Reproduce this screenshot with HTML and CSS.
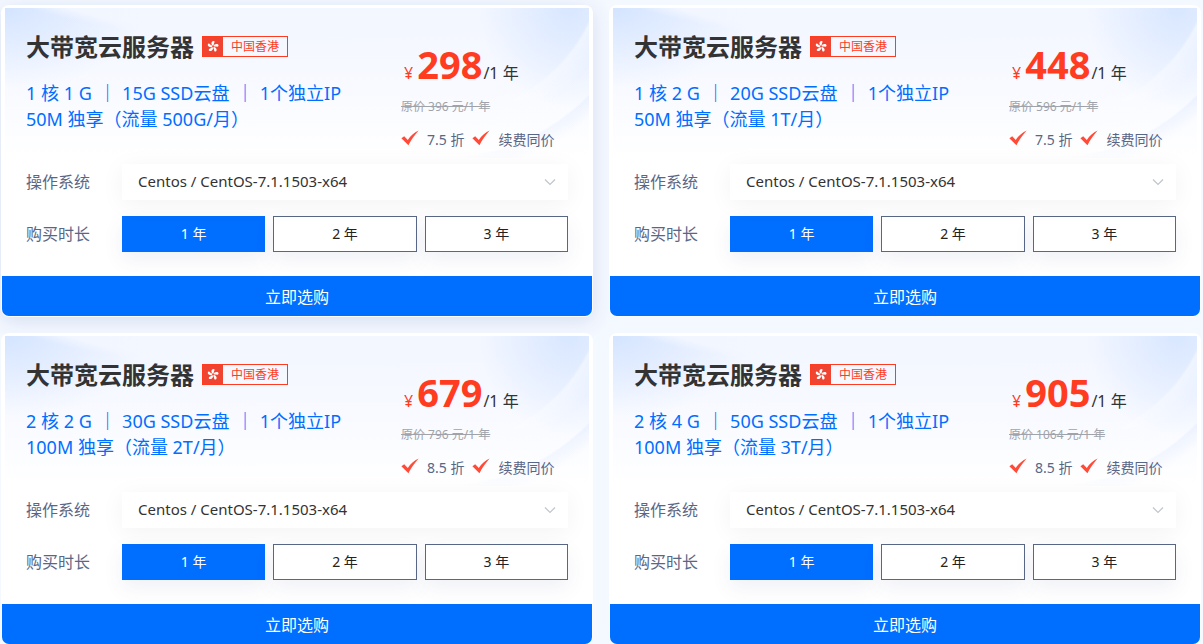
FILE: index.html
```html
<!DOCTYPE html>
<html lang="zh-CN">
<head>
  <meta charset="UTF-8">
  <title>大带宽云服务器</title>
  <link rel="stylesheet" href="styles.css">
</head>
<body>
  <svg class="sprite" xmlns="http://www.w3.org/2000/svg">
    <symbol id="icon-flower" viewBox="0 0 20 20">
      <g fill="currentColor">
        <path id="petal" d="M9.700 9C7.500 7.800 6.900 4.400 8.600 2.400c1.500-1.500 3.700-1.200 3.900.3.100 1.200-1.100 1.700-1.200 2.900-.1 1.300-.2 2.500-1.600 3.400z"/>
        <use href="#petal" transform="rotate(72 10 10)"/>
        <use href="#petal" transform="rotate(144 10 10)"/>
        <use href="#petal" transform="rotate(216 10 10)"/>
        <use href="#petal" transform="rotate(288 10 10)"/>
      </g>
    </symbol>
    <symbol id="icon-check" viewBox="0 0 18 16">
      <path fill="currentColor" d="M.4 8.200 3.200 6.300l3.600 3.600C9.500 6 13 2.800 17.600.6 13.700 5 10.200 10 7.400 15.200z"/>
    </symbol>
    <symbol id="icon-arrow" viewBox="0 0 12 8">
      <path fill="none" stroke="currentColor" stroke-width="1.200" d="M1 1.500l5 5 5-5"/>
    </symbol>
  </svg>

  <main class="plans">
    <section class="card card-active">
      <div class="card-body">
        <div class="summary">
          <div class="info">
            <h2 class="title">大带宽云服务器 <span class="region"><svg class="flag"><use href="#icon-flower"/></svg><span class="region-name">中国香港</span></span></h2>
            <p class="specs">1 核 1 G <span class="sep">｜</span> 15G SSD云盘 <span class="sep">｜</span> 1个独立IP<br>50M 独享（流量 500G/月）</p>
          </div>
          <div class="pricing">
            <p class="price"><span class="yen">¥</span><strong>298</strong>/1 年</p>
            <p class="origin"><del>原价 396 元/1 年</del></p>
            <p class="perks"><svg><use href="#icon-check"/></svg><span>7.5 折</span><svg><use href="#icon-check"/></svg><span>续费同价</span></p>
          </div>
        </div>
        <div class="row">
          <label class="label" for="os-1">操作系统</label>
          <div class="select">
            <select id="os-1"><option>Centos / CentOS-7.1.1503-x64</option></select>
            <svg class="arrow"><use href="#icon-arrow"/></svg>
          </div>
        </div>
        <div class="row">
          <span class="label" id="time-1">购买时长</span>
          <div class="times" role="group" aria-labelledby="time-1">
            <button type="button" class="time active">1 年</button>
            <button type="button" class="time">2 年</button>
            <button type="button" class="time">3 年</button>
          </div>
        </div>
      </div>
      <button type="button" class="buy">立即选购</button>
    </section>

    <section class="card">
      <div class="card-body">
        <div class="summary">
          <div class="info">
            <h2 class="title">大带宽云服务器 <span class="region"><svg class="flag"><use href="#icon-flower"/></svg><span class="region-name">中国香港</span></span></h2>
            <p class="specs">1 核 2 G <span class="sep">｜</span> 20G SSD云盘 <span class="sep">｜</span> 1个独立IP<br>50M 独享（流量 1T/月）</p>
          </div>
          <div class="pricing">
            <p class="price"><span class="yen">¥</span><strong>448</strong>/1 年</p>
            <p class="origin"><del>原价 596 元/1 年</del></p>
            <p class="perks"><svg><use href="#icon-check"/></svg><span>7.5 折</span><svg><use href="#icon-check"/></svg><span>续费同价</span></p>
          </div>
        </div>
        <div class="row">
          <label class="label" for="os-2">操作系统</label>
          <div class="select">
            <select id="os-2"><option>Centos / CentOS-7.1.1503-x64</option></select>
            <svg class="arrow"><use href="#icon-arrow"/></svg>
          </div>
        </div>
        <div class="row">
          <span class="label" id="time-2">购买时长</span>
          <div class="times" role="group" aria-labelledby="time-2">
            <button type="button" class="time active">1 年</button>
            <button type="button" class="time">2 年</button>
            <button type="button" class="time">3 年</button>
          </div>
        </div>
      </div>
      <button type="button" class="buy">立即选购</button>
    </section>

    <section class="card">
      <div class="card-body">
        <div class="summary">
          <div class="info">
            <h2 class="title">大带宽云服务器 <span class="region"><svg class="flag"><use href="#icon-flower"/></svg><span class="region-name">中国香港</span></span></h2>
            <p class="specs">2 核 2 G <span class="sep">｜</span> 30G SSD云盘 <span class="sep">｜</span> 1个独立IP<br>100M 独享（流量 2T/月）</p>
          </div>
          <div class="pricing">
            <p class="price"><span class="yen">¥</span><strong>679</strong>/1 年</p>
            <p class="origin"><del>原价 796 元/1 年</del></p>
            <p class="perks"><svg><use href="#icon-check"/></svg><span>8.5 折</span><svg><use href="#icon-check"/></svg><span>续费同价</span></p>
          </div>
        </div>
        <div class="row">
          <label class="label" for="os-3">操作系统</label>
          <div class="select">
            <select id="os-3"><option>Centos / CentOS-7.1.1503-x64</option></select>
            <svg class="arrow"><use href="#icon-arrow"/></svg>
          </div>
        </div>
        <div class="row">
          <span class="label" id="time-3">购买时长</span>
          <div class="times" role="group" aria-labelledby="time-3">
            <button type="button" class="time active">1 年</button>
            <button type="button" class="time">2 年</button>
            <button type="button" class="time">3 年</button>
          </div>
        </div>
      </div>
      <button type="button" class="buy">立即选购</button>
    </section>

    <section class="card">
      <div class="card-body">
        <div class="summary">
          <div class="info">
            <h2 class="title">大带宽云服务器 <span class="region"><svg class="flag"><use href="#icon-flower"/></svg><span class="region-name">中国香港</span></span></h2>
            <p class="specs">2 核 4 G <span class="sep">｜</span> 50G SSD云盘 <span class="sep">｜</span> 1个独立IP<br>100M 独享（流量 3T/月）</p>
          </div>
          <div class="pricing">
            <p class="price"><span class="yen">¥</span><strong>905</strong>/1 年</p>
            <p class="origin"><del>原价 1064 元/1 年</del></p>
            <p class="perks"><svg><use href="#icon-check"/></svg><span>8.5 折</span><svg><use href="#icon-check"/></svg><span>续费同价</span></p>
          </div>
        </div>
        <div class="row">
          <label class="label" for="os-4">操作系统</label>
          <div class="select">
            <select id="os-4"><option>Centos / CentOS-7.1.1503-x64</option></select>
            <svg class="arrow"><use href="#icon-arrow"/></svg>
          </div>
        </div>
        <div class="row">
          <span class="label" id="time-4">购买时长</span>
          <div class="times" role="group" aria-labelledby="time-4">
            <button type="button" class="time active">1 年</button>
            <button type="button" class="time">2 年</button>
            <button type="button" class="time">3 年</button>
          </div>
        </div>
      </div>
      <button type="button" class="buy">立即选购</button>
    </section>
  </main>
</body>
</html>
```

FILE: styles.css
```css
:root {
  --primary: #006eff;
  --danger: #ff3c1f;
  --slate: #596787;
  --muted: #a0a3aa;
}

* {
  margin: 0;
  padding: 0;
  box-sizing: border-box;
}

body {
  font-family: "Noto Sans", "Noto Sans CJK SC", sans-serif;
  background-color: #f4f8ff;
  color: #333;
}

button,
select {
  font-family: inherit;
}

.sprite {
  display: none;
}

.plans {
  display: grid;
  grid-template-columns: 1fr 1fr;
  gap: 16px;
  padding: 5px 2px 0 1px;
}

.card {
  min-width: 0;
  padding: 1px;
  border-radius: 8px;
  background-color: #fff;
}

.card-active {
  box-shadow: 0 4px 20px rgba(70, 100, 170, 0.16);
}

.card-body {
  position: relative;
  isolation: isolate;
  margin: 2px 3px 0;
  padding: 23px 21px 24px;
  background:
    radial-gradient(ellipse 90px 100px at calc(100% - 20px) 0, rgba(205, 224, 255, 0.7), transparent),
    radial-gradient(ellipse 320px 70px at 300px -36px, rgba(243, 247, 255, 0.9) 90%, transparent),
    radial-gradient(ellipse 140px 80px at 0 0, rgba(205, 224, 255, 0.8), transparent),
    linear-gradient(#f2f6ff, #f8faff 80px, #fff 150px);
}

/* Curved ribbons in the top right corner */
.card-body::before {
  content: "";
  position: absolute;
  z-index: -1;
  top: 0;
  right: 0;
  width: 130px;
  height: 150px;
  background:
    radial-gradient(circle at -19px -58px, transparent 164px, rgba(255, 255, 255, 0.5) 167px, transparent 190px),
    radial-gradient(circle at -19px -58px, transparent 207px, rgba(215, 229, 255, 0.35) 209px, transparent 225px);
  mask-image: linear-gradient(to right, transparent, #000);
}

.summary {
  display: flex;
  justify-content: space-between;
  height: 133px;
}

.title {
  display: flex;
  align-items: center;
  gap: 8px;
  height: 32px;
  font-size: 24px;
  line-height: 32px;
  white-space: nowrap;
}

.region {
  display: flex;
  height: 21px;
  margin-bottom: 2px;
  border: 1px solid var(--danger);
  color: var(--danger);
  font-size: 12px;
  font-weight: 400;
  line-height: 19px;
}

.flag {
  width: 20px;
  height: 19px;
  padding: 3px;
  background-color: #f04432;
  color: #fff;
}

.region-name {
  padding: 0 8px;
}

.specs {
  margin-top: 17px;
  color: var(--primary);
  font-size: 18px;
  line-height: 26px;
  white-space: nowrap;
}

.sep {
  margin: 0 1px 0 2px;
  font-weight: 500;
}

.pricing {
  width: 167px;
  white-space: nowrap;
}

.price {
  height: 66px;
  padding-left: 3px;
  font-size: 16px;
  line-height: 66px;
}

.price strong {
  margin: 0 1px 0 4px;
  color: var(--danger);
  font-size: 38px;
}

.yen {
  color: var(--danger);
}

.origin {
  margin-top: 2px;
  color: var(--muted);
  font-size: 12px;
  line-height: 16px;
}

.perks {
  display: flex;
  gap: 8px;
  margin-top: 15px;
  color: var(--slate);
  font-size: 14px;
  line-height: 20px;
}

.perks svg {
  width: 18px;
  height: 16px;
  color: #ff4b38;
}

.row {
  display: flex;
  align-items: center;
  height: 36px;
}

.row + .row {
  margin-top: 16px;
}

.label {
  width: 96px;
  padding-bottom: 2px;
  color: var(--slate);
  font-size: 16px;
}

.select {
  position: relative;
  flex: 1;
  box-shadow: 0 4px 24px rgba(0, 0, 0, 0.05);
}

.select select {
  display: block;
  width: 100%;
  height: 36px;
  padding: 0 16px 2px;
  border: 0;
  appearance: none;
  background-color: #fff;
  color: #333;
  font-size: 15px;
}

.arrow {
  position: absolute;
  top: 14px;
  right: 12px;
  width: 12px;
  height: 8px;
  color: #c0c4cc;
  pointer-events: none;
}

.times {
  display: grid;
  flex: 1;
  grid-template-columns: repeat(3, 1fr);
  gap: 8px;
}

.time {
  height: 36px;
  padding-bottom: 2px;
  border: 1px solid var(--slate);
  background-color: #fff;
  box-shadow: 0 8px 20px rgba(60, 80, 140, 0.08);
  color: #222;
  font-size: 14px;
  cursor: pointer;
}

.time.active {
  border-color: var(--primary);
  background-color: var(--primary);
  color: #fff;
}

.buy {
  display: block;
  width: 100%;
  height: 40px;
  border: 0;
  border-radius: 0 0 7px 7px;
  background-color: var(--primary);
  color: #fff;
  font-size: 16px;
  cursor: pointer;
}
```
